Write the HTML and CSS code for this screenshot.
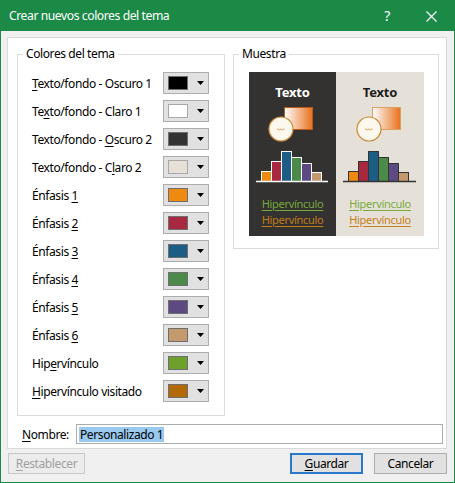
FILE: index.html
```html
<!DOCTYPE html>
<html lang="es">
<head>
<meta charset="utf-8">
<title>Crear nuevos colores del tema</title>
<link rel="stylesheet" href="styles.css">
</head>
<body>
<div class="window">
  <div class="titlebar">
    <span class="title">Crear nuevos colores del tema</span>
    <span class="tb-help">?</span>
    <span class="tb-close"><svg width="11" height="11" viewBox="0 0 11 11"><path d="M0.5 0.5 L10.5 10.5 M10.5 0.5 L0.5 10.5" stroke="#fff" stroke-width="1.2" fill="none"/></svg></span>
  </div>
  <div class="content">
    <div class="panel">
      <div class="groups">
        <div class="group group-colors">
          <span class="legend">Colores del tema</span>
          <div class="row"><span class="lbl"><u>T</u>exto/fondo - Oscuro 1</span><span class="cbtn"><span class="sw sw-dk1"></span><svg class="arr" width="7" height="4" viewBox="0 0 7 4"><path d="M0 0 H7 L3.5 4 Z"/></svg></span></div>
          <div class="row"><span class="lbl">Te<u>x</u>to/fondo - Claro 1</span><span class="cbtn"><span class="sw sw-lt1"></span><svg class="arr" width="7" height="4" viewBox="0 0 7 4"><path d="M0 0 H7 L3.5 4 Z"/></svg></span></div>
          <div class="row"><span class="lbl">Texto/fondo - <u>O</u>scuro 2</span><span class="cbtn"><span class="sw sw-dk2"></span><svg class="arr" width="7" height="4" viewBox="0 0 7 4"><path d="M0 0 H7 L3.5 4 Z"/></svg></span></div>
          <div class="row"><span class="lbl">Texto/fondo - C<u>l</u>aro 2</span><span class="cbtn"><span class="sw sw-lt2"></span><svg class="arr" width="7" height="4" viewBox="0 0 7 4"><path d="M0 0 H7 L3.5 4 Z"/></svg></span></div>
          <div class="row"><span class="lbl">Énfasis <u>1</u></span><span class="cbtn"><span class="sw sw-a1"></span><svg class="arr" width="7" height="4" viewBox="0 0 7 4"><path d="M0 0 H7 L3.5 4 Z"/></svg></span></div>
          <div class="row"><span class="lbl">Énfasis <u>2</u></span><span class="cbtn"><span class="sw sw-a2"></span><svg class="arr" width="7" height="4" viewBox="0 0 7 4"><path d="M0 0 H7 L3.5 4 Z"/></svg></span></div>
          <div class="row"><span class="lbl">Énfasis <u>3</u></span><span class="cbtn"><span class="sw sw-a3"></span><svg class="arr" width="7" height="4" viewBox="0 0 7 4"><path d="M0 0 H7 L3.5 4 Z"/></svg></span></div>
          <div class="row"><span class="lbl">Énfasis <u>4</u></span><span class="cbtn"><span class="sw sw-a4"></span><svg class="arr" width="7" height="4" viewBox="0 0 7 4"><path d="M0 0 H7 L3.5 4 Z"/></svg></span></div>
          <div class="row"><span class="lbl">Énfasis <u>5</u></span><span class="cbtn"><span class="sw sw-a5"></span><svg class="arr" width="7" height="4" viewBox="0 0 7 4"><path d="M0 0 H7 L3.5 4 Z"/></svg></span></div>
          <div class="row"><span class="lbl">Énfasis <u>6</u></span><span class="cbtn"><span class="sw sw-a6"></span><svg class="arr" width="7" height="4" viewBox="0 0 7 4"><path d="M0 0 H7 L3.5 4 Z"/></svg></span></div>
          <div class="row"><span class="lbl">Hip<u>e</u>rvínculo</span><span class="cbtn"><span class="sw sw-hl"></span><svg class="arr" width="7" height="4" viewBox="0 0 7 4"><path d="M0 0 H7 L3.5 4 Z"/></svg></span></div>
          <div class="row"><span class="lbl"><u>H</u>ipervínculo visitado</span><span class="cbtn"><span class="sw sw-fhl"></span><svg class="arr" width="7" height="4" viewBox="0 0 7 4"><path d="M0 0 H7 L3.5 4 Z"/></svg></span></div>
        </div>
        <div class="group group-sample">
          <span class="legend">Muestra</span>
          <div class="preview">
            <div class="half half-dark">
              <div class="ptitle">Texto</div>
              <svg class="art" width="87" height="88" viewBox="0 0 87 88">
                <defs>
                  <linearGradient id="gd" x1="0" y1="0" x2="1" y2="0">
                    <stop offset="0" stop-color="#ffffff"/>
                    <stop offset="1" stop-color="#e8711c"/>
                  </linearGradient>
                </defs>
                <rect x="35.5" y="7.5" width="28" height="22" fill="url(#gd)" stroke="#b95a14" stroke-width="1"/>
                <circle cx="32" cy="29" r="12" fill="#fdf8ee" stroke="#c98a3a" stroke-width="1.2"/>
                <path d="M28 29.5 q0.75 -1 1.5 0 t1.5 0 t1.5 0 t1.5 0 t1.5 0" stroke="#d67a20" stroke-width="0.8" fill="none"/>
                <g stroke="#ffffff" stroke-width="1">
                  <rect x="12.5" y="71.5" width="10" height="10" fill="#ee8a10"/>
                  <rect x="22.5" y="61.5" width="10" height="20" fill="#a8283f"/>
                  <rect x="32.5" y="51.5" width="10" height="30" fill="#1d5c85"/>
                  <rect x="42.5" y="57.5" width="10" height="24" fill="#4b8a48"/>
                  <rect x="52.5" y="63.5" width="10" height="18" fill="#5e4a82"/>
                  <rect x="62.5" y="72.5" width="10" height="9" fill="#c49a6c"/>
                </g>
                <path d="M7 81.5 H79" stroke="#ffffff" stroke-width="1.6"/>
              </svg>
              <div class="plinks">
                <span class="lnk lnk-hl">Hipervínculo</span>
                <span class="lnk lnk-fhl">Hipervínculo</span>
              </div>
            </div>
            <div class="half half-light">
              <div class="ptitle">Texto</div>
              <svg class="art" width="88" height="88" viewBox="0 0 88 88">
                <defs>
                  <linearGradient id="gl" x1="0" y1="0" x2="1" y2="0">
                    <stop offset="0" stop-color="#ffffff"/>
                    <stop offset="1" stop-color="#e8711c"/>
                  </linearGradient>
                </defs>
                <rect x="36.5" y="7.5" width="28" height="22" fill="url(#gl)" stroke="#d9a060" stroke-width="1"/>
                <circle cx="33" cy="29" r="12" fill="#fdf8ee" stroke="#c98a3a" stroke-width="1.2"/>
                <path d="M29 29.5 q0.75 -1 1.5 0 t1.5 0 t1.5 0 t1.5 0 t1.5 0" stroke="#d67a20" stroke-width="0.8" fill="none"/>
                <g stroke="#333333" stroke-width="1">
                  <rect x="12.5" y="71.5" width="10" height="10" fill="#ee8a10"/>
                  <rect x="22.5" y="61.5" width="10" height="20" fill="#a8283f"/>
                  <rect x="32.5" y="51.5" width="10" height="30" fill="#1d5c85"/>
                  <rect x="42.5" y="57.5" width="10" height="24" fill="#4b8a48"/>
                  <rect x="52.5" y="63.5" width="10" height="18" fill="#5e4a82"/>
                  <rect x="62.5" y="72.5" width="10" height="9" fill="#c49a6c"/>
                </g>
                <path d="M7 81.5 H80" stroke="#333333" stroke-width="1.6"/>
              </svg>
              <div class="plinks">
                <span class="lnk lnk-hl2">Hipervínculo</span>
                <span class="lnk lnk-fhl2">Hipervínculo</span>
              </div>
            </div>
          </div>
        </div>
      </div>
      <div class="namerow">
        <span class="namelbl"><u>N</u>ombre:</span>
        <div class="namebox"><span class="sel">Personalizado 1</span></div>
      </div>
    </div>
    <div class="buttons">
      <span class="btn btn-disabled"><u>R</u>establecer</span>
      <span class="spacer"></span>
      <span class="btn btn-default"><u>G</u>uardar</span>
      <span class="btn">Cancelar</span>
    </div>
  </div>
</div>
</body>
</html>
```

FILE: styles.css
```css
* { box-sizing: border-box; }
html, body { margin: 0; padding: 0; }
body {
  width: 455px;
  height: 483px;
  background: #f0f0f0;
  font-family: "Noto Sans", "DejaVu Sans", sans-serif;
  font-size: 12px;
  letter-spacing: -0.4px;
  color: #000;
}
u { text-decoration: underline; text-underline-offset: 2px; text-decoration-thickness: 1px; }

.window {
  width: 455px;
  height: 483px;
  border: 1px solid #1b8a47;
  display: flex;
  flex-direction: column;
  background: #f0f0f0;
}
.titlebar {
  height: 30px;
  flex: 0 0 30px;
  background: #1b8a47;
  color: #fff;
  display: flex;
  align-items: center;
  padding-left: 8px;
}
.title {
  flex: 1;
  font-size: 12.2px;
  letter-spacing: -0.45px;
  line-height: 18px;
  margin-top: -1px;
}
.tb-help {
  width: 20px;
  text-align: center;
  font-size: 14px;
  margin-right: 29px;
  margin-top: -2px;
}
.tb-close {
  display: flex;
  width: 11px;
  margin-right: 17px;
}

.content {
  flex: 1;
  padding: 6px 7px 0 6px;
  display: flex;
  flex-direction: column;
}
.panel {
  height: 412px;
  background: #fff;
  border: 1px solid #d9d9d9;
  padding: 16px 0 0 0;
  display: flex;
  flex-direction: column;
}
.groups {
  display: flex;
  padding-left: 9px;
  gap: 8px;
  align-items: flex-start;
}
.group {
  position: relative;
  border: 1px solid #dcdcdc;
}
.legend {
  position: absolute;
  top: -9px;
  left: 5px;
  padding: 0 3px;
  background: #fff;
  line-height: 16px;
}
.group-colors {
  width: 208px;
  height: 362px;
  padding: 14px 15px 0 14px;
}
.row {
  height: 28px;
  display: flex;
  align-items: center;
}
.lbl {
  flex: 1;
  white-space: nowrap;
}
.cbtn {
  width: 46px;
  height: 22px;
  background: #e1e1e1;
  border: 1px solid #adadad;
  display: flex;
  align-items: center;
  padding-left: 4px;
}
.sw {
  width: 20px;
  height: 14px;
  border: 1px solid #6e6e6e;
  display: block;
}
.arr { margin-left: 9px; fill: #000; display: block; }
.sw-dk1 { background: #000000; }
.sw-lt1 { background: #ffffff; border-color: #a8a8a8; }
.sw-dk2 { background: #333333; }
.sw-lt2 { background: #e6e0d7; border-color: #a8a8a8; }
.sw-a1 { background: #ee8a10; }
.sw-a2 { background: #a8283f; }
.sw-a3 { background: #1d5c85; }
.sw-a4 { background: #4b8a48; }
.sw-a5 { background: #5e4a82; }
.sw-a6 { background: #c49a6c; }
.sw-hl { background: #6ea12c; }
.sw-fhl { background: #b36a05; }

.group-sample {
  width: 206px;
  height: 195px;
  padding: 17px 14px 0 15px;
}
.preview {
  display: flex;
  width: 175px;
  height: 164px;
}
.half {
  display: flex;
  flex-direction: column;
  align-items: center;
  padding-top: 12px;
}
.half-dark { width: 87px; background: #333231; color: #fff; }
.half-light { width: 88px; background: #e6e1d8; color: #1e1e1e; }
.ptitle {
  font-weight: bold;
  font-size: 13px;
  letter-spacing: -0.2px;
  line-height: 16px;
  height: 16px;
}
.art { display: block; }
.plinks {
  margin-top: 8px;
  display: flex;
  flex-direction: column;
  align-items: center;
}
.lnk {
  font-size: 11px;
  line-height: 16px;
  text-decoration: underline;
  text-underline-offset: 2px;
  letter-spacing: -0.3px;
}
.lnk-hl { color: #76a83a; }
.lnk-fhl { color: #c17d18; }
.lnk-hl2 { color: #78aa3a; }
.lnk-fhl2 { color: #c5801c; }

.namerow {
  display: flex;
  align-items: center;
  margin-top: 8px;
  padding-left: 14px;
  padding-right: 3px;
}
.namelbl { width: 54px; }
.namebox {
  flex: 1;
  height: 20px;
  border: 1px solid #ababab;
  background: #fff;
  display: flex;
  align-items: center;
  padding-left: 2px;
}
.sel {
  background: #99c9ef;
  line-height: 15px;
  padding: 0 1px;
}

.buttons {
  display: flex;
  padding: 4px 0 0 1px;
  gap: 11px;
}
.spacer { flex: 1; }
.btn {
  height: 21px;
  width: 73px;
  background: #e1e1e1;
  border: 1px solid #adadad;
  display: flex;
  align-items: center;
  justify-content: center;
}
.btn-disabled {
  width: 77px;
  color: #a0a0a0;
  background: #ececec;
  border-color: #c8c8c8;
}
.btn-default {
  border: 2px solid #2a78c8;
}
```
